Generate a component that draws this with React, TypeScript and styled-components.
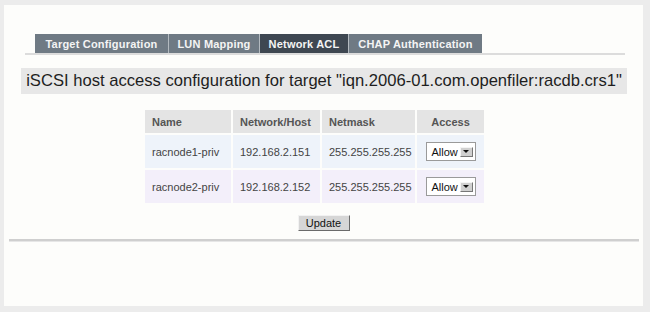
import styled, { createGlobalStyle } from "styled-components";

const GlobalStyle = createGlobalStyle`
    html, body {
        margin: 0;
        padding: 0;
        background: #ececec;
        font-family: "Liberation Sans", Arial, sans-serif;
    }
`;

const Page = styled.div`
    padding: 5px 7px 6px 4px;
    height: 312px;
    box-sizing: border-box;
`;

const Panel = styled.div`
    background: #fdfdfb;
    height: 301px;
    padding-top: 29px;
    box-sizing: border-box;
    display: flex;
    flex-direction: column;
`;

const TabBar = styled.div`
    display: flex;
    margin: 0 18px 0 21px;
    padding-left: 10px;
    border-bottom: 2px solid #dcdcdc;
`;

const Tab = styled.div<{ $active?: boolean; $width: number }>`
    width: ${p => p.$width}px;
    height: 19px;
    box-sizing: border-box;
    display: flex;
    align-items: center;
    justify-content: center;
    background: ${p => (p.$active ? "#3e4751" : "#6f7a84")};
    color: #f4f4f4;
    font-weight: bold;
    font-size: 11px;
    letter-spacing: 0.2px;
    border-right: 1px solid #b3bac0;
    &:last-child {
        border-right: 0;
    }
`;

const Heading = styled.h2`
    margin: 13px 16px 0 17px;
    height: 26px;
    background: #e7e7e7;
    color: #1e1e1e;
    font-weight: normal;
    font-size: 16.6px;
    display: flex;
    align-items: center;
    justify-content: center;
`;

const Table = styled.table`
    align-self: flex-start;
    table-layout: fixed;
    width: 343px;
    margin: 14px 0 0 139px;
    border-spacing: 2px;
    font-size: 11px;
    color: #444;
`;

const Th = styled.th<{ $center?: boolean }>`
    background: #e4e4e4;
    color: #555;
    font-weight: bold;
    height: 23px;
    padding: 0 0 0 7px;
    text-align: ${p => (p.$center ? "center" : "left")};
    ${p => p.$center && "padding: 0;"}
`;

const Td = styled.td<{ $tint: string; $center?: boolean }>`
    background: ${p => p.$tint};
    height: 33px;
    padding: 0 0 0 7px;
    white-space: nowrap;
    ${p => p.$center && "padding: 0;"}
`;

const SelectBox = styled.div`
    margin: 0 auto;
    width: 50px;
    height: 19px;
    box-sizing: border-box;
    border: 1px solid #9a9a9a;
    background: #fff;
    display: flex;
    align-items: center;
    justify-content: space-between;
    padding: 0 2px 0 5px;
    color: #111;
    font-size: 11px;
`;

const ArrowBtn = styled.span`
    width: 13px;
    height: 10px;
    box-sizing: border-box;
    background: #d0d0d0;
    border: 1px solid;
    border-color: #f4f4f4 #777 #777 #f4f4f4;
    display: flex;
    align-items: center;
    justify-content: center;
    &::after {
        content: "";
        border-left: 3px solid transparent;
        border-right: 3px solid transparent;
        border-top: 3px solid #111;
    }
`;

const UpdateButton = styled.button`
    align-self: center;
    margin: 10px 0 0 0;
    width: 52px;
    height: 16px;
    padding: 0;
    font-family: "Liberation Sans", Arial, sans-serif;
    font-size: 11px;
    color: #111;
    background: #d6d6d6;
    border: 1px solid;
    border-color: #f2f2f2 #6a6a6a #6a6a6a #f2f2f2;
`;

const Rule = styled.div`
    margin: 8px 4px 0 5px;
    height: 2px;
    background: #cfcfcf;
    border-bottom: 1px solid #e6e6e6;
`;

const tabs = [
    { label: "Target Configuration", width: 134 },
    { label: "LUN Mapping", width: 91 },
    { label: "Network ACL", width: 89, active: true },
    { label: "CHAP Authentication", width: 133 },
];

const hosts = [
    { name: "racnode1-priv", host: "192.168.2.151", mask: "255.255.255.255", tint: "#eef3fa" },
    { name: "racnode2-priv", host: "192.168.2.152", mask: "255.255.255.255", tint: "#f3effa" },
];

const App = () => {
    return (
        <Page>
            <GlobalStyle />
            <Panel>
                <TabBar>
                    {tabs.map(t => (
                        <Tab key={t.label} $width={t.width} $active={t.active}>
                            {t.label}
                        </Tab>
                    ))}
                </TabBar>
                <Heading>iSCSI host access configuration for target "iqn.2006-01.com.openfiler:racdb.crs1"</Heading>
                <Table>
                    <colgroup>
                        <col style={{ width: 86 }} />
                        <col style={{ width: 87 }} />
                        <col style={{ width: 93 }} />
                        <col style={{ width: 67 }} />
                    </colgroup>
                    <thead>
                        <tr>
                            <Th>Name</Th>
                            <Th>Network/Host</Th>
                            <Th>Netmask</Th>
                            <Th $center>Access</Th>
                        </tr>
                    </thead>
                    <tbody>
                        {hosts.map(h => (
                            <tr key={h.name}>
                                <Td $tint={h.tint}>{h.name}</Td>
                                <Td $tint={h.tint}>{h.host}</Td>
                                <Td $tint={h.tint}>{h.mask}</Td>
                                <Td $tint={h.tint} $center>
                                    <SelectBox>
                                        Allow
                                        <ArrowBtn />
                                    </SelectBox>
                                </Td>
                            </tr>
                        ))}
                    </tbody>
                </Table>
                <UpdateButton>Update</UpdateButton>
                <Rule />
            </Panel>
        </Page>
    );
};

export default App;
